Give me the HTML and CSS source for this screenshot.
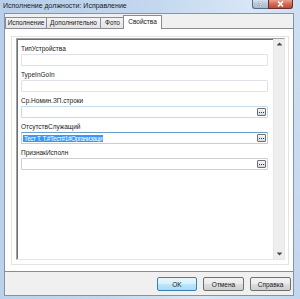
FILE: index.html
```html
<!DOCTYPE html>
<html lang="ru">
<head>
    <meta charset="UTF-8">
    <title>Исполнение должности: Исправление</title>
    <link rel="stylesheet" href="styles.css">
</head>
<body>
    <div class="window">
        <div class="titlebar">
            <span class="title">Исполнение должности: Исправление</span>
            <div class="caption-btns">
                <span class="cbtn help">?</span>
                <span class="cbtn close">
                    <svg width="7" height="6" viewBox="0 0 7 6"><path d="M1 0.5 L6 5.5 M6 0.5 L1 5.5" stroke="#fff" stroke-width="1.6"/></svg>
                </span>
            </div>
        </div>

        <div class="client">
            <div class="tabs">
                <div class="tab t1">Исполнение</div>
                <div class="tab t2">Дополнительно</div>
                <div class="tab t3">Фото</div>
                <div class="tab active">Свойства</div>
            </div>

            <div class="tabpage">
                <div class="group">
                    <div class="scrollbox">
                        <div class="fields">
                            <div class="field">
                                <div class="label">ТипУстройства</div>
                                <div class="input"></div>
                            </div>
                            <div class="field">
                                <div class="label">TypeInGoIn</div>
                                <div class="input"></div>
                            </div>
                            <div class="field">
                                <div class="label">Ср.Номин.ЗП.строки</div>
                                <div class="input hover">
                                    <span class="value"></span>
                                    <span class="dots"><svg width="5" height="1" viewBox="0 0 5 1"><path d="M0 0h1v1H0zM2 0h1v1H2zM4 0h1v1H4z" fill="#1c3b6b"/></svg></span>
                                </div>
                            </div>
                            <div class="field">
                                <div class="label">ОтсутствСлужащий</div>
                                <div class="input focus">
                                    <span class="value"><span class="selected">Тест Т. Т.#Тест#1#Организаци</span></span>
                                    <span class="dots"><svg width="5" height="1" viewBox="0 0 5 1"><path d="M0 0h1v1H0zM2 0h1v1H2zM4 0h1v1H4z" fill="#1c3b6b"/></svg></span>
                                </div>
                            </div>
                            <div class="field">
                                <div class="label">ПризнакИсполн</div>
                                <div class="input plain">
                                    <span class="value"></span>
                                    <span class="dots"><svg width="5" height="1" viewBox="0 0 5 1"><path d="M0 0h1v1H0zM2 0h1v1H2zM4 0h1v1H4z" fill="#1c3b6b"/></svg></span>
                                </div>
                            </div>
                        </div>
                        <div class="vscroll">
                            <svg width="5" height="4" viewBox="0 0 5 4"><path d="M0 3 L2.5 0.5 L5 3 Z" fill="#4a4a4a"/><path d="M0 3.5h5v0.5H0z" fill="#4a4a4a"/></svg>
                            <svg width="5" height="4" viewBox="0 0 5 4"><path d="M0 0h5v0.5H0z" fill="#4a4a4a"/><path d="M0 1 L2.5 3.5 L5 1 Z" fill="#4a4a4a"/></svg>
                        </div>
                    </div>
                </div>
            </div>

            <div class="buttons">
                <button class="btn default">OK</button>
                <button class="btn">Отмена</button>
                <button class="btn">Справка</button>
            </div>
        </div>
    </div>
</body>
</html>
```

FILE: styles.css
```css
* {
    box-sizing: border-box;
}

body {
    margin: 0;
    font-family: "Liberation Sans", Arial, sans-serif;
    font-size: 6.5px;
    color: #1a1a1a;
}

.window {
    width: 300px;
    height: 299px;
    display: flex;
    flex-direction: column;
    background: linear-gradient(100deg, #b7cfea 0%, #c3d8ef 45%, #d9e7f6 72%, #c1d6ee 100%);
}

/* title bar */
.titlebar {
    height: 13px;
    display: flex;
    justify-content: space-between;
    padding: 0 7px 0 3px;
}

.title {
    line-height: 12px;
    font-size: 7px;
}

.caption-btns {
    display: flex;
    align-items: flex-start;
}

.cbtn {
    height: 9px;
    display: flex;
    align-items: center;
    justify-content: center;
    border: 1px solid #5a6b82;
    border-top: none;
}

.help {
    width: 16px;
    border-right: none;
    border-radius: 0 0 0 3px;
    background: linear-gradient(#d6e2ef, #b8c8db 50%, #a8bad0);
    color: #fff;
    font-size: 7px;
    font-weight: bold;
    text-shadow: 0 0 1px #334;
}

.close {
    width: 25px;
    border-color: #6d2a2a;
    border-radius: 0 0 3px 0;
    background: linear-gradient(#e8a190, #d26a55 50%, #c24a35);
}

/* client area */
.client {
    flex: 1;
    margin: 0 6px 3px 4px;
    display: flex;
    flex-direction: column;
    background: #f0f0f0;
    border: 1px solid #8793a4;
}

.tabs {
    height: 14px;
    display: flex;
    align-items: flex-end;
}

.tab {
    height: 11px;
    line-height: 10px;
    margin-right: -1px;
    text-align: center;
    border: 1px solid #898c95;
    border-bottom: none;
    background: linear-gradient(#f3f3f3, #e4e4e4);
    white-space: nowrap;
}

.t1 {
    width: 42px;
}

.t2 {
    width: 55px;
}

.t3 {
    width: 25px;
}

.tab.active {
    width: 39px;
    height: 14px;
    line-height: 12px;
    margin: 0 -2px -1px -1px;
    background: #fff;
    position: relative;
    z-index: 1;
}

.tabpage {
    flex: 1;
    display: flex;
    padding: 7px 4px 6px 6px;
    background: #fff;
    border-top: 1px solid #898c95;
    border-bottom: 1px solid #898c95;
}

.group {
    flex: 1;
    display: flex;
    padding: 1px 3px 4px 4px;
    border: 1px solid #e3e3e3;
}

.scrollbox {
    flex: 1;
    display: flex;
    background: #fff;
    border: 1px solid;
    border-color: #a0a0a0 #e6e6e6 #e6e6e6 #a0a0a0;
    box-shadow: inset 1px 1px 0 #6f6f6f;
}

.fields {
    flex: 1;
    padding: 5px 5px 0 4px;
}

.field {
    margin-bottom: 4px;
}

.label {
    height: 9px;
    line-height: 9px;
    margin-bottom: 1px;
}

.input {
    height: 12px;
    display: flex;
    align-items: center;
    padding: 0 1px;
    border: 1px solid #dfe2ea;
    border-radius: 1px;
    background: #fff;
}

.input.hover {
    border-color: #c3dcec;
}

.input.focus {
    border-color: #b6d2ea;
    border-top-color: #6a9ec9;
}

.input.plain {
    border-color: #cfcfcf;
}

.value {
    flex: 1;
    line-height: 9px;
}

.selected {
    background: #3399ff;
    color: #fff;
    padding: 0 1px;
    font-size: 6.3px;
    letter-spacing: -0.35px;
}

.dots {
    width: 9px;
    height: 8px;
    display: flex;
    align-items: center;
    justify-content: center;
    border: 1px solid #707070;
    border-radius: 1px;
    background: linear-gradient(#f6f6f6, #dadada);
}

.vscroll {
    width: 11px;
    display: flex;
    flex-direction: column;
    justify-content: space-between;
    align-items: center;
    padding: 3px 0 3px;
    background: #eeeeee;
    border-left: 1px solid #e6e6e6;
}

/* bottom buttons */
.buttons {
    height: 23px;
    display: flex;
    justify-content: flex-end;
    gap: 6px;
    padding: 5px 2px 0 0;
}

.btn {
    width: 41px;
    height: 14px;
    padding: 0;
    font-family: inherit;
    font-size: 6.5px;
    color: #1a1a1a;
    border: 1px solid #707070;
    border-radius: 2px;
    background: linear-gradient(#f2f2f2 0%, #ebebeb 50%, #dddddd 51%, #cfcfcf 100%);
}

.btn.default {
    width: 40px;
    border-color: #3c7fb1;
    background: linear-gradient(#eaf6fd 0%, #d9f0fc 50%, #bee6fd 51%, #a7d9f5 100%);
}
```
